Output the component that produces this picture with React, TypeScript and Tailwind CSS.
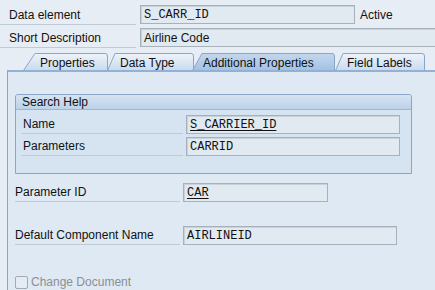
const FONT = { fontFamily: '"Liberation Sans", Arial, sans-serif' }
const MONO = { fontFamily: '"Liberation Mono", "Courier New", monospace' }

type TabProps = { id: string; label: string; width: number; slant: number; textLeft: number; active?: boolean; className?: string }

function Tab({ id, label, width, slant, textLeft, active, className = '' }: TabProps) {
  const top = active ? '#c4d8ee' : '#eef3f9'
  const bottom = active ? '#a3c0e3' : '#c9dbef'
  return (
    <div className={`relative h-[17px] shrink-0 ${className}`} style={{ width }}>
      <svg className="absolute inset-0" width={width} height={17}>
        <defs>
          <linearGradient id={id} x1="0" y1="0" x2="0" y2="1">
            <stop offset="0" stopColor={top} />
            <stop offset="1" stopColor={bottom} />
          </linearGradient>
        </defs>
        <path
          d={`M0.5 17.5 L${slant} 0.5 H${width - 3} Q${width - 0.5} 0.5 ${width - 0.5} 3 V17.5 Z`}
          fill={`url(#${id})`}
          stroke="#8aa5c5"
        />
      </svg>
      <span className="absolute top-[2px] text-[12px] leading-[16px] text-[#111] whitespace-nowrap" style={{ left: textLeft }}>
        {label}
      </span>
    </div>
  )
}

function Field({ value, width, mono, link }: { value: string; width: number; mono?: boolean; link?: boolean }) {
  return (
    <div
      className="h-[19px] shrink-0 border border-[#a7b1bb] bg-[#e1e9f1] shadow-[inset_1px_1px_0_#c9d1d9] pl-[3px] text-[12px] leading-[18px] text-[#111] whitespace-nowrap overflow-hidden"
      style={{ width, ...(mono ? MONO : {}) }}
    >
      <span className={link ? 'underline decoration-[#111] underline-offset-[2px]' : ''}>{value}</span>
    </div>
  )
}

function Label({ text, width, className = '' }: { text: string; width: number; className?: string }) {
  return (
    <div
      className={`h-[19px] shrink-0 border-b border-[#c2cbd5] text-[12px] leading-[19px] text-[#111] whitespace-nowrap ${className}`}
      style={{ width }}
    >
      {text}
    </div>
  )
}

export default function App() {
  return (
    <div className="w-[435px] h-[290px] overflow-hidden bg-[#e7edf4] pt-[5px]" style={FONT}>
      {/* header */}
      <div className="flex items-start">
        <Label text="Data element" width={136} className="pl-[9px] h-[20px] leading-[20px]" />
        <div className="ml-[4px]"><Field value="S_CARR_ID" width={215} mono /></div>
        <span className="ml-[5px] text-[12px] leading-[20px] text-[#111]">Active</span>
      </div>
      <div className="flex items-start mt-[3px]">
        <Label text="Short Description" width={136} className="pl-[9px] h-[20px] leading-[20px]" />
        <div className="ml-[4px]"><Field value="Airline Code" width={300} /></div>
      </div>

      {/* tabs */}
      <div className="flex mt-[5px] pl-[23px]">
        <Tab id="t1" label="Properties" width={85} slant={12} textLeft={17} />
        <Tab id="t2" label="Data Type" width={87} slant={8} textLeft={13} className="-ml-[1px]" />
        <Tab id="t3" label="Additional Properties" width={143} slant={10} textLeft={11} active className="-ml-[2px]" />
        <Tab id="t4" label="Field Labels" width={90} slant={8} textLeft={12} />
      </div>

      {/* tab panel */}
      <div className="ml-[7px] h-[230px] border-l border-t-2 border-l-[#8aa5c5] border-t-[#93b1d6] bg-[#dfe9f3] pl-[7px] pt-[22px]">
        <div className="w-[397px] h-[80px] border border-[#8aa5c5] rounded-t-[3px] bg-[#d6e4f1]">
          <div className="h-[15px] border-b border-[#9db6d2] bg-gradient-to-b from-[#d6e4f2] to-[#bcd2e9] pl-[6px] text-[12px] leading-[15px] text-[#111] rounded-t-[2px]">
            Search Help
          </div>
          <div className="flex items-start mt-[5px]">
            <Label text="Name" width={162} className="ml-[5px] pl-[2px]" />
            <div className="ml-[3px]"><Field value="S_CARRIER_ID" width={214} mono link /></div>
          </div>
          <div className="flex items-start mt-[3px]">
            <Label text="Parameters" width={162} className="ml-[5px] pl-[2px]" />
            <div className="ml-[3px]"><Field value="CARRID" width={214} mono /></div>
          </div>
        </div>

        <div className="flex items-start mt-[9px]">
          <Label text="Parameter ID" width={165} />
          <div className="ml-[3px]"><Field value="CAR" width={145} mono link /></div>
        </div>
        <div className="flex items-start mt-[24px]">
          <Label text="Default Component Name" width={165} />
          <div className="ml-[3px]"><Field value="AIRLINEID" width={214} mono /></div>
        </div>

        <div className="flex items-center mt-[30px]">
          <div className="w-[13px] h-[13px] border border-[#a3a9b0] bg-[#e4ebf2] rounded-[2px]" />
          <span className="ml-[3px] text-[12px] leading-[14px] text-[#8b8f94]">Change Document</span>
        </div>
      </div>
    </div>
  )
}
